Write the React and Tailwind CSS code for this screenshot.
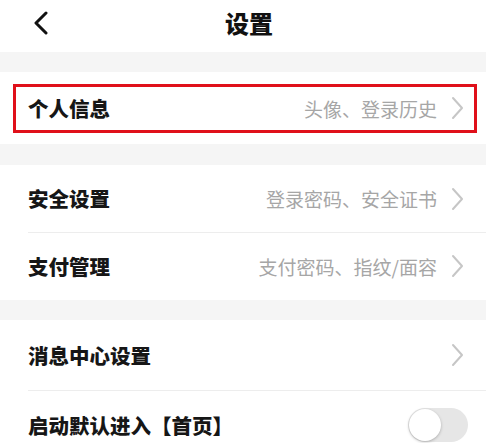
import React from 'react';

const font = { fontFamily: '"Noto Sans CJK SC", "Noto Sans", sans-serif' };

function Chevron() {
    return (
        <svg width="13" height="24" viewBox="0 0 13 24" className="shrink-0">
            <path d="M2 2 L11 12 L2 22" fill="none" stroke="#c6c6c6" strokeWidth="2" strokeLinecap="round" strokeLinejoin="round" />
        </svg>
    );
}

function Row({ label, hint, divider, toggle, highlight, height = 'h-[68px]' }) {
    return (
        <div className={`relative flex items-center ${height} pl-[28px] pr-[22px]`}>
            {divider && <div className="absolute top-0 left-[28px] right-0 h-px bg-[#ededed]" />}
            {highlight && (
                <div className="absolute left-[13px] right-[9px] top-[12px] bottom-[11px] border-[3.5px] border-[#e0101a]" />
            )}
            <span className="text-[20.5px] font-black text-[#161616] leading-none">{label}</span>
            <div className="flex-1" />
            {hint && <span className="text-[19px] text-[#a6a6a6] leading-none mr-[14px]">{hint}</span>}
            {toggle ? (
                <div className="relative w-[60px] h-[34px] rounded-full bg-[#e6e6e6] -mr-[4px]">
                    <div className="absolute left-[1px] top-[1px] w-[32px] h-[32px] rounded-full bg-white shadow-[0_1px_3px_rgba(0,0,0,0.25)]" />
                </div>
            ) : (
                <Chevron />
            )}
        </div>
    );
}

export default function App() {
    return (
        <div className="w-[486px] h-[443px] overflow-hidden bg-[#f5f5f5]" style={font}>
            <div className="relative flex items-center justify-center h-[52px] bg-white pl-[12px] pb-[6px]">
                <svg width="16" height="24" viewBox="0 0 16 24" className="absolute left-[33px] top-[11px]">
                    <path d="M13 2 L3 12 L13 22" fill="none" stroke="#111" strokeWidth="3" strokeLinecap="round" strokeLinejoin="round" />
                </svg>
                <span className="text-[24px] font-black text-[#111] leading-none">设置</span>
            </div>

            <div className="mt-[20px] bg-white">
                <Row label="个人信息" hint="头像、登录历史" highlight height="h-[72px]" />
            </div>

            <div className="mt-[21px] bg-white">
                <Row label="安全设置" hint="登录密码、安全证书" height="h-[67px]" />
                <Row label="支付管理" hint="支付密码、指纹/面容" divider />
            </div>

            <div className="mt-[20px] bg-white">
                <Row label="消息中心设置" height="h-[70px]" />
                <Row label="启动默认进入【首页】" divider toggle height="h-[70px]" />
            </div>
        </div>
    );
}
